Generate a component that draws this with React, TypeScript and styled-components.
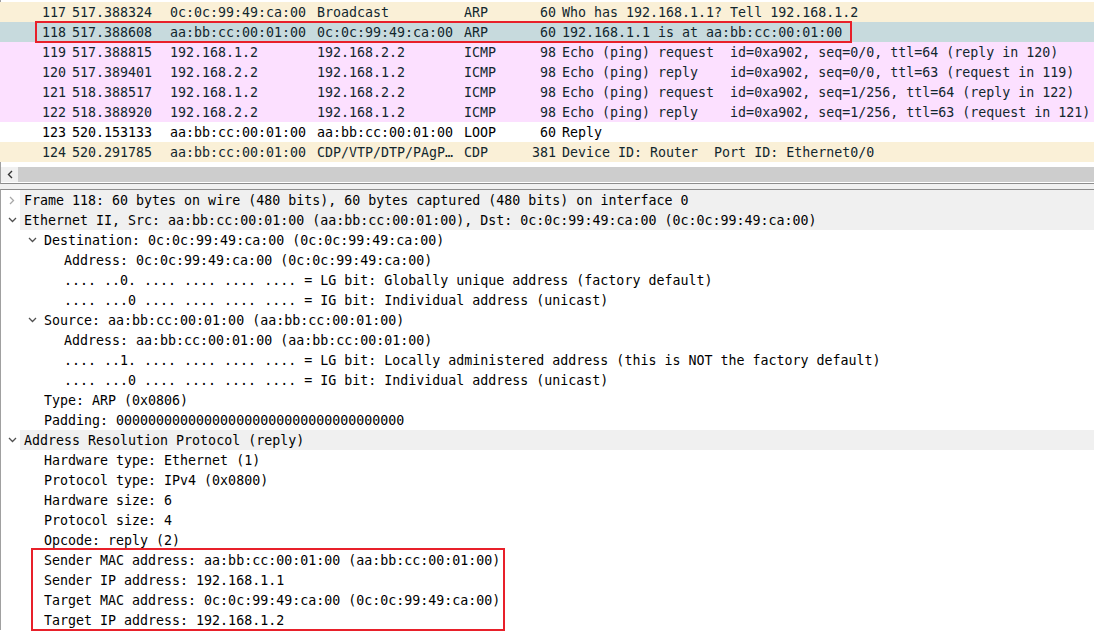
import React from 'react';
import styled, {createGlobalStyle} from 'styled-components';

const GlobalStyle = createGlobalStyle`
    html, body {
        margin: 0;
        padding: 0;
        background: #ffffff;
    }
`;

type RowKind = 'arp' | 'icmp' | 'plain' | 'cdp';

type Packet = {
    no: number;
    time: string;
    src: string;
    dst: string;
    proto: string;
    len: number;
    info: string;
    kind: RowKind;
    selected?: boolean;
};

type Node = {
    level: number;
    text: string;
    toggle?: 'open' | 'closed';
};

const rowColors: Record<RowKind, string> = {
    arp: '#faf0d7',
    icmp: '#fce0ff',
    plain: '#ffffff',
    cdp: '#faf0d7',
};

const packets: Array<Packet> = [
    {no: 117, time: '517.388324', src: '0c:0c:99:49:ca:00', dst: 'Broadcast', proto: 'ARP', len: 60, info: 'Who has 192.168.1.1? Tell 192.168.1.2', kind: 'arp'},
    {no: 118, time: '517.388608', src: 'aa:bb:cc:00:01:00', dst: '0c:0c:99:49:ca:00', proto: 'ARP', len: 60, info: '192.168.1.1 is at aa:bb:cc:00:01:00', kind: 'arp', selected: true},
    {no: 119, time: '517.388815', src: '192.168.1.2', dst: '192.168.2.2', proto: 'ICMP', len: 98, info: 'Echo (ping) request  id=0xa902, seq=0/0, ttl=64 (reply in 120)', kind: 'icmp'},
    {no: 120, time: '517.389401', src: '192.168.2.2', dst: '192.168.1.2', proto: 'ICMP', len: 98, info: 'Echo (ping) reply    id=0xa902, seq=0/0, ttl=63 (request in 119)', kind: 'icmp'},
    {no: 121, time: '518.388517', src: '192.168.1.2', dst: '192.168.2.2', proto: 'ICMP', len: 98, info: 'Echo (ping) request  id=0xa902, seq=1/256, ttl=64 (reply in 122)', kind: 'icmp'},
    {no: 122, time: '518.388920', src: '192.168.2.2', dst: '192.168.1.2', proto: 'ICMP', len: 98, info: 'Echo (ping) reply    id=0xa902, seq=1/256, ttl=63 (request in 121)', kind: 'icmp'},
    {no: 123, time: '520.153133', src: 'aa:bb:cc:00:01:00', dst: 'aa:bb:cc:00:01:00', proto: 'LOOP', len: 60, info: 'Reply', kind: 'plain'},
    {no: 124, time: '520.291785', src: 'aa:bb:cc:00:01:00', dst: 'CDP/VTP/DTP/PAgP…', proto: 'CDP', len: 381, info: 'Device ID: Router  Port ID: Ethernet0/0', kind: 'cdp'},
];

const tree: Array<Node> = [
    {level: 0, toggle: 'closed', text: 'Frame 118: 60 bytes on wire (480 bits), 60 bytes captured (480 bits) on interface 0'},
    {level: 0, toggle: 'open', text: 'Ethernet II, Src: aa:bb:cc:00:01:00 (aa:bb:cc:00:01:00), Dst: 0c:0c:99:49:ca:00 (0c:0c:99:49:ca:00)'},
    {level: 1, toggle: 'open', text: 'Destination: 0c:0c:99:49:ca:00 (0c:0c:99:49:ca:00)'},
    {level: 2, text: 'Address: 0c:0c:99:49:ca:00 (0c:0c:99:49:ca:00)'},
    {level: 2, text: '.... ..0. .... .... .... .... = LG bit: Globally unique address (factory default)'},
    {level: 2, text: '.... ...0 .... .... .... .... = IG bit: Individual address (unicast)'},
    {level: 1, toggle: 'open', text: 'Source: aa:bb:cc:00:01:00 (aa:bb:cc:00:01:00)'},
    {level: 2, text: 'Address: aa:bb:cc:00:01:00 (aa:bb:cc:00:01:00)'},
    {level: 2, text: '.... ..1. .... .... .... .... = LG bit: Locally administered address (this is NOT the factory default)'},
    {level: 2, text: '.... ...0 .... .... .... .... = IG bit: Individual address (unicast)'},
    {level: 1, text: 'Type: ARP (0x0806)'},
    {level: 1, text: 'Padding: 000000000000000000000000000000000000'},
    {level: 0, toggle: 'open', text: 'Address Resolution Protocol (reply)'},
    {level: 1, text: 'Hardware type: Ethernet (1)'},
    {level: 1, text: 'Protocol type: IPv4 (0x0800)'},
    {level: 1, text: 'Hardware size: 6'},
    {level: 1, text: 'Protocol size: 4'},
    {level: 1, text: 'Opcode: reply (2)'},
    {level: 1, text: 'Sender MAC address: aa:bb:cc:00:01:00 (aa:bb:cc:00:01:00)'},
    {level: 1, text: 'Sender IP address: 192.168.1.1'},
    {level: 1, text: 'Target MAC address: 0c:0c:99:49:ca:00 (0c:0c:99:49:ca:00)'},
    {level: 1, text: 'Target IP address: 192.168.1.2'},
];

const Window = styled.div`
    position: relative;
    width: 1094px;
    height: 636px;
    overflow: hidden;
    background: #ffffff;
    font-family: 'DejaVu Sans Mono', 'Liberation Mono', monospace;
    font-size: 13.3px;
    color: #000000;
`;

const PacketPane = styled.div`
    display: flex;
    flex-direction: column;
    border-left: 1px solid #a0a0a0;
    border-bottom: 1px solid #8c8c8c;
    background: #ffffff;
`;

const PacketList = styled.div`
    display: flex;
    flex-direction: column;
    padding: 2px 0 5px;
    margin-left: -1px;
`;

const PacketRow = styled.div<{$kind: RowKind; $selected?: boolean}>`
    display: grid;
    grid-template-columns: 70px 98px 147px 147px 60px 38px 1fr;
    box-sizing: border-box;
    height: 20px;
    padding-top: 1px;
    line-height: 19px;
    white-space: pre;
    color: ${(props) => (props.$kind === 'plain' ? '#000000' : '#12272e')};
    background: ${(props) => (props.$selected ? '#c7dadd' : rowColors[props.$kind])};
`;

const Cell = styled.div<{$right?: boolean; $wide?: boolean}>`
    overflow: ${(props) => (props.$wide ? 'visible' : 'hidden')};
    text-align: ${(props) => (props.$right ? 'right' : 'left')};
    padding: ${(props) => (props.$right ? '0 4px 0 0' : '0 5px 0 2px')};
`;

const HScroll = styled.div`
    display: flex;
    height: 15px;
    margin-bottom: 1px;
    background: #cdcdcd;
`;

const ScrollButton = styled.div`
    display: flex;
    align-items: center;
    justify-content: center;
    width: 17px;
    background: #f0f0f0;
`;

const Splitter = styled.div`
    height: 5px;
    background: #f0f0f0;
`;

const DetailPane = styled.div`
    display: flex;
    flex-direction: column;
    border-top: 1px solid #8c8c8c;
    border-left: 1px solid #a0a0a0;
`;

const TreeRow = styled.div<{$level: number}>`
    display: flex;
    box-sizing: border-box;
    height: 20px;
    line-height: 20px;
    padding-left: ${(props) => props.$level * 20 + 3}px;
    white-space: pre;
`;

const Toggle = styled.div`
    display: flex;
    align-items: center;
    justify-content: center;
    width: 16px;
    flex: none;
`;

const Label = styled.div<{$top?: boolean}>`
    flex: 1;
    box-sizing: border-box;
    padding: 1px 0 0 4px;
    line-height: 19px;
    background: ${(props) => (props.$top ? '#f0f0f0' : 'transparent')};
`;

const Highlight = styled.div`
    position: absolute;
    border: 2px solid #e8202a;
    box-sizing: border-box;
    pointer-events: none;
`;

const Chevron = ({open}: {open: boolean}) =>
    open ? (
        <svg width="9" height="6" viewBox="0 0 9 6">
            <path d="M1 1 L4.5 4.5 L8 1" fill="none" stroke="#505050" strokeWidth="1.3" />
        </svg>
    ) : (
        <svg width="6" height="9" viewBox="0 0 6 9">
            <path d="M1 1 L4.5 4.5 L1 8" fill="none" stroke="#a8a8a8" strokeWidth="1.3" />
        </svg>
    );

export default function App() {
    return (
        <Window>
            <GlobalStyle />
            <PacketPane>
                <PacketList>
                    {packets.map((p) => (
                        <PacketRow key={p.no} $kind={p.kind} $selected={p.selected}>
                            <Cell $right>{p.no}</Cell>
                            <Cell>{p.time}</Cell>
                            <Cell>{p.src}</Cell>
                            <Cell>{p.dst}</Cell>
                            <Cell>{p.proto}</Cell>
                            <Cell $right>{p.len}</Cell>
                            <Cell $wide>{p.info}</Cell>
                        </PacketRow>
                    ))}
                </PacketList>
                <HScroll>
                    <ScrollButton>
                        <svg width="6" height="9" viewBox="0 0 6 9">
                            <path d="M5 1 L1.5 4.5 L5 8" fill="none" stroke="#333" strokeWidth="1.4" />
                        </svg>
                    </ScrollButton>
                </HScroll>
            </PacketPane>
            <Splitter />
            <DetailPane>
                {tree.map((n, i) => (
                    <TreeRow key={i} $level={n.level}>
                        <Toggle>{n.toggle && <Chevron open={n.toggle === 'open'} />}</Toggle>
                        <Label $top={n.level === 0}>{n.text}</Label>
                    </TreeRow>
                ))}
            </DetailPane>
            <Highlight style={{left: 35, top: 21, width: 817, height: 22}} />
            <Highlight style={{left: 31, top: 548, width: 474, height: 83}} />
        </Window>
    );
}
